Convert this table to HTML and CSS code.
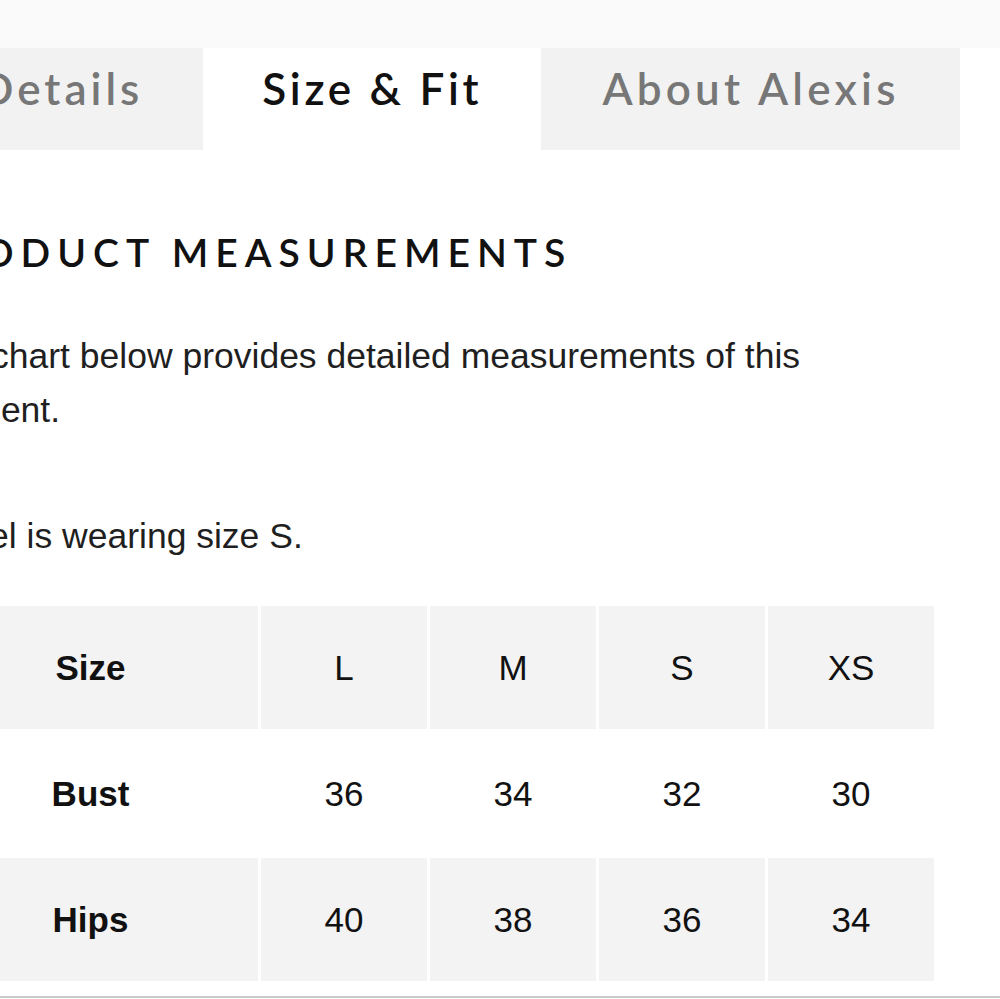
FILE: index.html
```html
<!DOCTYPE html>
<html lang="en">
<head>
    <meta charset="UTF-8">
    <meta name="viewport" content="width=device-width, initial-scale=1.0">
    <title>Size &amp; Fit</title>
    <link rel="stylesheet" href="styles.css">
</head>
<body>
    <div class="topbar"></div>

    <div class="page">
        <div class="tabs">
            <div class="tab">Details</div>
            <div class="tab active">Size &amp; Fit</div>
            <div class="tab about">About Alexis</div>
        </div>

        <div class="panel">
            <h2>Product Measurements</h2>
            <p class="intro">The chart below provides detailed measurements of this garment.</p>
            <p class="note">Model is wearing size S.</p>

            <table class="size-table">
                <tr class="shaded">
                    <th>Size</th>
                    <td>L</td>
                    <td>M</td>
                    <td>S</td>
                    <td>XS</td>
                </tr>
                <tr>
                    <th>Bust</th>
                    <td>36</td>
                    <td>34</td>
                    <td>32</td>
                    <td>30</td>
                </tr>
                <tr class="shaded">
                    <th>Hips</th>
                    <td>40</td>
                    <td>38</td>
                    <td>36</td>
                    <td>34</td>
                </tr>
            </table>
        </div>
    </div>

    <div class="bottom-rule"></div>
</body>
</html>
```

FILE: styles.css
```css
html, body {
    margin: 0;
    height: 999px;
    overflow: hidden;
}
body {
    background: #fff;
    font-family: "Liberation Sans", Arial, sans-serif;
    color: #1f1f1f;
    position: relative;
}
.topbar {
    height: 48px;
    background: #fafafa;
}
.page {
    margin-left: -80px;
}
.tabs {
    display: flex;
    height: 102px;
}
.tab {
    display: flex;
    align-items: center;
    padding: 0 60px 22px;
    background: #f2f2f2;
    color: #777;
    font-family: Lato, "Noto Sans", sans-serif;
    font-size: 44px;
    font-weight: 600;
    letter-spacing: 4px;
}
.tab.active {
    padding: 0 59px 22px;
    background: #fff;
    color: #111;
    letter-spacing: 3.7px;
}
.tab.about {
    padding: 0 60px 22px 61px;
    letter-spacing: 4.2px;
}
.panel h2 {
    margin: 79px 0 0;
    font-family: Lato, "Noto Sans", sans-serif;
    font-size: 39px;
    line-height: 47px;
    font-weight: 600;
    letter-spacing: 7px;
    text-transform: uppercase;
    color: #111;
}
.panel p {
    margin: 0;
    font-size: 35.5px;
    line-height: 54px;
    width: 910px;
}
.intro {
    padding-top: 53px;
}
.note {
    padding-top: 72px;
}
.size-table {
    margin-top: 40px;
    border-collapse: separate;
    border-spacing: 3px;
    font-size: 35px;
    color: #111;
}
.size-table th,
.size-table td {
    height: 123px;
    padding: 0;
    text-align: center;
    font-weight: normal;
}
.size-table th {
    width: 335px;
    font-weight: bold;
}
.size-table td {
    width: 166px;
}
.size-table .shaded th,
.size-table .shaded td {
    background: #f3f3f3;
}
.bottom-rule {
    position: absolute;
    left: 0;
    right: 0;
    top: 996px;
    height: 2px;
    background: #c9c9c9;
}
```
